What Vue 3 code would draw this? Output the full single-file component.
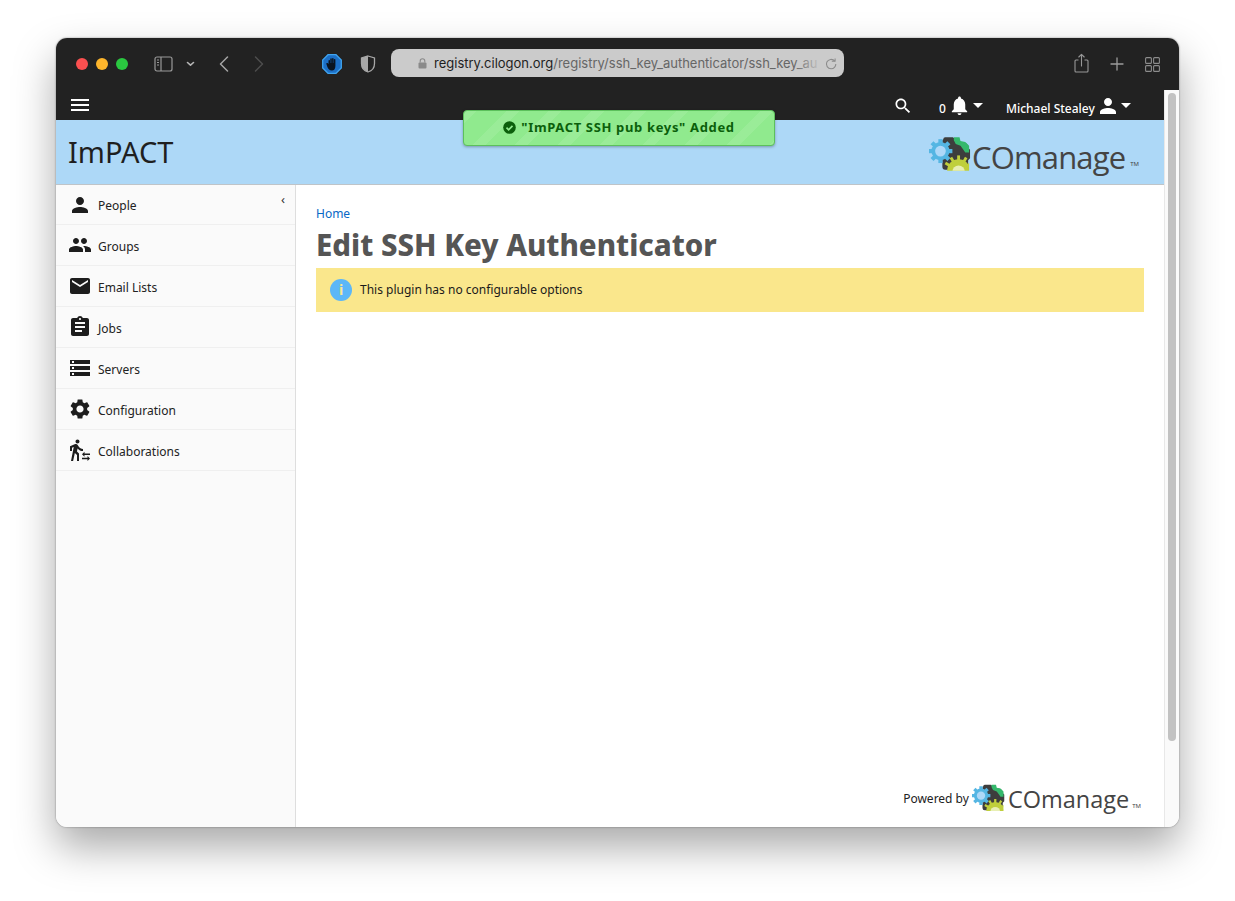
<script setup>
const nav = [
  { label: 'People', vb: '0 0 24 24', d: 'M12 12c2.21 0 4-1.79 4-4s-1.79-4-4-4-4 1.79-4 4 1.79 4 4 4zm0 2c-2.67 0-8 1.34-8 4v2h16v-2c0-2.66-5.33-4-8-4z' },
  { label: 'Groups', vb: '0 0 24 24', d: 'M16 11c1.66 0 2.99-1.34 2.99-3S17.66 5 16 5c-1.66 0-3 1.34-3 3s1.34 3 3 3zm-8 0c1.66 0 2.99-1.34 2.99-3S9.66 5 8 5C6.34 5 5 6.34 5 8s1.34 3 3 3zm0 2c-2.33 0-7 1.17-7 3.5V19h14v-2.5c0-2.33-4.67-3.5-7-3.5zm8 0c-.29 0-.62.02-.97.05 1.16.84 1.97 1.97 1.97 3.45V19h6v-2.5c0-2.33-4.67-3.5-7-3.5z' },
  { label: 'Email Lists', vb: '0 0 24 24', d: 'M20 4H4c-1.1 0-1.99.9-1.99 2L2 18c0 1.1.9 2 2 2h16c1.1 0 2-.9 2-2V6c0-1.1-.9-2-2-2zm0 4l-8 5-8-5V6l8 5 8-5v2z' },
  { label: 'Jobs', vb: '0 0 24 24', d: 'M19 3h-4.18C14.4 1.84 13.3 1 12 1c-1.3 0-2.4.84-2.82 2H5c-1.1 0-2 .9-2 2v14c0 1.1.9 2 2 2h14c1.1 0 2-.9 2-2V5c0-1.1-.9-2-2-2zm-7 0c.55 0 1 .45 1 1s-.45 1-1 1-1-.45-1-1 .45-1 1-1zm2 14H7v-2h7v2zm3-4H7v-2h10v2zm0-4H7V7h10v2z' },
  { label: 'Servers', vb: '0 0 24 24', d: 'M2 20h20v-4H2v4zm2-3h2v2H4v-2zM2 4v4h20V4H2zm4 3H4V5h2v2zm-4 7h20v-4H2v4zm2-3h2v2H4v-2z' },
  { label: 'Configuration', vb: '0 0 24 24', d: 'M19.14 12.94c.04-.3.06-.61.06-.94 0-.32-.02-.64-.07-.94l2.03-1.58c.18-.14.23-.41.12-.61l-1.92-3.32c-.12-.22-.37-.29-.59-.22l-2.39.96c-.5-.38-1.03-.7-1.62-.94l-.36-2.54c-.04-.24-.24-.41-.48-.41h-3.84c-.24 0-.43.17-.47.41l-.36 2.54c-.59.24-1.13.57-1.62.94l-2.39-.96c-.22-.08-.47 0-.59.22L2.74 8.87c-.12.21-.08.47.12.61l2.03 1.58c-.05.3-.09.63-.09.94s.02.64.07.94l-2.03 1.58c-.18.14-.23.41-.12.61l1.92 3.32c.12.22.37.29.59.22l2.39-.96c.5.38 1.03.7 1.62.94l.36 2.54c.05.24.24.41.48.41h3.84c.24 0 .44-.17.47-.41l.36-2.54c.59-.24 1.13-.56 1.62-.94l2.39.96c.22.08.47 0 .59-.22l1.92-3.32c.12-.22.07-.47-.12-.61l-2.01-1.58zM12 15.6c-1.98 0-3.6-1.62-3.6-3.6s1.62-3.6 3.6-3.6 3.6 1.62 3.6 3.6-1.62 3.6-3.6 3.6z' },
  { label: 'Collaborations', vb: '0 0 24 24', d: 'M16.49 15.5v-1.75L14 16.25l2.49 2.5V17H22v-1.5zm3.02 4.25H14v1.5h5.51V23L22 20.5 19.51 18zM9.5 5.5c1.1 0 2-.9 2-2s-.9-2-2-2-2 .9-2 2 .9 2 2 2zM5.75 8.9L3 23h2.1l1.75-8L9 17v6h2v-7.55L8.95 13.4l.6-3C10.85 12 12.8 13 15 13v-2c-1.85 0-3.45-1-4.35-2.45l-.95-1.6C9.35 6.35 8.7 6 8 6c-.25 0-.5.05-.75.1L2 8.3V13h2V9.65l1.75-.75' },
]
const person = nav[0].d
const gearTeeth = [0, 45, 90, 135, 180, 225, 270, 315]
</script>

<template>
  <svg class="defs" width="0" height="0" aria-hidden="true">
    <symbol id="gears" viewBox="0 0 44 36">
      <path d="M15 3q0-2 2-2h8l3 2 2 3h6l4 2 1 4 2 2v9l-2 2v7q0 3-3 3H17q-3 0-3-3V4z" fill="#3d3d3d" />
      <path d="M26 1h6l1 4 5 1 4 4v7h-4l-2-3-3-4-5-2-2-4z" fill="#35b86c" />
      <circle cx="12" cy="15.5" r="9.500" fill="#55b6e3" />
      <rect v-for="a in gearTeeth" :key="a" x="9.800" y="3" width="4.400" height="5" fill="#55b6e3" :transform="`rotate(${a} 12 15.5)`" />
      <circle cx="12" cy="15.5" r="5.600" fill="#aed8f8" />
      <clipPath id="yclip"><rect x="14" y="16" width="28" height="20" /></clipPath>
      <g clip-path="url(#yclip)">
        <circle cx="31" cy="36" r="12" fill="#bfcf3c" />
        <rect v-for="a in [-60,-30,0,30,60]" :key="a" x="29.500" y="20" width="3" height="6" fill="#bfcf3c" :transform="`rotate(${a} 31 36)`" />
        <circle cx="31" cy="37" r="6.500" fill="#e8efb4" />
      </g>
    </symbol>
  </svg>

  <div class="desktop">
    <div class="window">
      <header class="chrome">
        <div class="lights">
          <span class="light red"></span>
          <span class="light yellow"></span>
          <span class="light green"></span>
        </div>
        <svg class="sidebar-btn" width="19" height="16" viewBox="0 0 19 16" fill="none" stroke="#9a9a9a" stroke-width="1.2">
          <rect x="1" y="1" width="17" height="14" rx="2" />
          <path d="M7 1v14" />
          <path d="M3 4h2M3 6.5h2M3 9h2" stroke-width="1.1" />
        </svg>
        <svg class="chev-down" width="9" height="6" viewBox="0 0 9 6" fill="none" stroke="#b5b5b5" stroke-width="1.6" stroke-linecap="round" stroke-linejoin="round">
          <path d="M1.5 1.5l3 2.7 3-2.7" />
        </svg>
        <svg class="back" width="10" height="16" viewBox="0 0 10 16" fill="none" stroke="#a5a5a5" stroke-width="1.5" stroke-linecap="round" stroke-linejoin="round">
          <path d="M8.5 1L1.5 8l7 7" />
        </svg>
        <svg class="forward" width="10" height="16" viewBox="0 0 10 16" fill="none" stroke="#4d4d4d" stroke-width="1.5" stroke-linecap="round" stroke-linejoin="round">
          <path d="M1.5 1l7 7-7 7" />
        </svg>
        <svg class="stop" width="20" height="20" viewBox="0 0 20 20">
          <path d="M6 .7h8L19.300 6v8L14 19.300H6L.7 14V6z" fill="#1c6fc6" stroke="#3fa4f0" stroke-width="1.300" />
          <path d="M6.500 10V6.500a.8.8 0 011.500 0V9h.3V4.800a.8.8 0 011.500 0V9h.3V4.500a.8.8 0 011.500 0V9h.3V5.500a.8.8 0 011.500 0V12c0 3-1.500 4.500-3.500 4.500-2.500 0-3.500-1.500-4.500-3.500L4.400 10c-.4-1 .9-1.500 1.400-.7z" fill="#0a1420" />
        </svg>
        <svg class="shield" width="16" height="18" viewBox="0 0 16 18">
          <path d="M8 1l6.500 2v5.500C14.500 13 11.500 16 8 17 4.500 16 1.500 13 1.500 8.500V3z" fill="none" stroke="#a8a8a8" stroke-width="1.3" />
          <path d="M8 1L1.500 3v5.500C1.500 13 4.500 16 8 17z" fill="#a8a8a8" />
        </svg>
        <div class="urlbar">
          <svg class="lock" width="9" height="11" viewBox="0 0 9 11">
            <rect x=".5" y="4.500" width="8" height="6" rx="1" fill="#8a8a8a" />
            <path d="M2.200 4.500V3a2.300 2.300 0 014.600 0v1.500" fill="none" stroke="#8a8a8a" stroke-width="1.100" />
          </svg>
          <span class="url"><span class="host">registry.cilogon.org</span>/registry/ssh_key_authenticator/ssh_key_au</span>
          <span class="fade"></span>
          <svg class="reload" width="12" height="12" viewBox="0 0 12 12" fill="none" stroke="#8c8c8c" stroke-width="1.100">
            <path d="M9.800 3.200A4.700 4.700 0 106.200 10.800 4.700 4.700 0 0010.800 6" />
            <path d="M6.800 3.200h3.300V.6" stroke-linejoin="round" />
          </svg>
        </div>
        <svg class="share" width="15" height="20" viewBox="0 0 15 20" fill="none" stroke="#989898" stroke-width="1.100">
          <path d="M4.500 7H2a1 1 0 00-1 1v10a1 1 0 001 1h11a1 1 0 001-1V8a1 1 0 00-1-1h-2.500" />
          <path d="M7.500 13V1.500M4.800 4l2.700-2.700L10.200 4" stroke-linecap="round" stroke-linejoin="round" />
        </svg>
        <svg class="plus" width="14" height="14" viewBox="0 0 14 14" stroke="#9c9c9c" stroke-width="1.300" stroke-linecap="round">
          <path d="M7 1v12M1 7h12" />
        </svg>
        <svg class="tabs" width="15" height="15" viewBox="0 0 15 15" fill="none" stroke="#8c8c8c" stroke-width="1.100">
          <rect x=".6" y=".6" width="5.800" height="5.800" rx="1" />
          <rect x="8.600" y=".6" width="5.800" height="5.800" rx="1" />
          <rect x=".6" y="8.600" width="5.800" height="5.800" rx="1" />
          <rect x="8.600" y="8.600" width="5.800" height="5.800" rx="1" />
        </svg>
      </header>

      <div class="viewport">
        <div class="app">
          <div class="topbar">
            <div class="hamburger"><i></i><i></i><i></i></div>
            <svg class="search" width="20" height="20" viewBox="0 0 24 24" fill="#fff">
              <path d="M15.500 14h-.79l-.28-.27C15.410 12.590 16 11.110 16 9.500 16 5.910 13.090 3 9.500 3S3 5.910 3 9.500 5.910 16 9.500 16c1.610 0 3.090-.59 4.230-1.570l.27.28v.79l5 4.990L20.490 19l-4.990-5zm-6 0C7.010 14 5 11.990 5 9.500S7.010 5 9.500 5 14 7.010 14 9.500 11.990 14 9.500 14z" />
            </svg>
            <span class="count">0</span>
            <svg class="bell" width="23" height="23" viewBox="0 0 24 24" fill="#fff">
              <path d="M12 22c1.100 0 2-.9 2-2h-4c0 1.100.89 2 2 2zm6-6v-5c0-3.070-1.640-5.640-4.500-6.320V4c0-.83-.67-1.500-1.500-1.500s-1.500.67-1.500 1.500v.68C7.630 5.360 6 7.920 6 11v5l-2 2v1h16v-1l-2-2z" />
            </svg>
            <span class="caret"></span>
            <span class="user">Michael Stealey</span>
            <svg class="user-icon" width="24" height="24" viewBox="0 0 24 24" fill="#fff"><path :d="person" /></svg>
            <span class="caret last"></span>
          </div>
          <div class="banner">
            <span class="co-name">ImPACT</span>
            <div class="logo big">
              <svg width="42" height="35"><use href="#gears" /></svg>
              <span class="wordmark">COmanage</span><span class="tm">TM</span>
            </div>
          </div>
          <div class="columns">
            <aside class="side">
              <span class="collapse">‹</span>
              <a v-for="item in nav" :key="item.label" class="nav-item">
                <svg width="24" height="24" :viewBox="item.vb" fill="#1d1d1d"><path :d="item.d" /></svg>
                <span>{{ item.label }}</span>
              </a>
            </aside>
            <main class="main">
              <a class="crumb">Home</a>
              <h1>Edit SSH Key Authenticator</h1>
              <div class="notice">
                <span class="info">i</span>
                <span class="notice-text">This plugin has no configurable options</span>
              </div>
              <footer class="foot">
                <span class="powered">Powered by</span>
                <div class="logo small">
                  <svg width="33" height="27"><use href="#gears" /></svg>
                  <span class="wordmark">COmanage</span><span class="tm">TM</span>
                </div>
              </footer>
            </main>
          </div>
        </div>
        <div class="scrollbar"><div class="thumb"></div></div>
      </div>

      <div class="toast">
        <svg width="13" height="13" viewBox="0 0 13 13">
          <circle cx="6.500" cy="6.500" r="6.300" fill="#0b5f0b" />
          <path d="M3.500 6.700l2.100 2.100 3.900-4" fill="none" stroke="#91ea8f" stroke-width="1.700" />
        </svg>
        <span>"ImPACT SSH pub keys" Added</span>
      </div>
    </div>
  </div>
</template>

<style>
html { overflow: hidden; }
html, body { margin: 0; background: #fff; }
</style>

<style scoped>
.defs { position: absolute; }
.desktop {
  height: 901px;
  box-sizing: border-box;
  padding: 38px 0 0 56px;
  overflow: hidden;
}
.window {
  position: relative;
  width: 1123px;
  height: 789px;
  border-radius: 11px;
  overflow: hidden;
  background: #fff;
  box-shadow: 0 20px 42px rgba(0, 0, 0, .34), 0 0 2px rgba(0, 0, 0, .45);
  font-family: "Noto Sans", sans-serif;
  display: flex;
  flex-direction: column;
}
.chrome {
  height: 52px;
  flex: none;
  background: #222;
  display: flex;
  align-items: center;
  padding-left: 20px;
}
.lights { display: flex; gap: 8px; }
.light { width: 12px; height: 12px; border-radius: 50%; }
.red { background: #fb5050; }
.yellow { background: #fdb52c; }
.green { background: #2ac840; }
.sidebar-btn { margin-left: 26px; }
.chev-down { margin-left: 13px; }
.back { margin-left: 24px; }
.forward { margin-left: 25px; }
.stop { margin-left: 58px; }
.shield { margin-left: 18px; }
.urlbar {
  position: relative;
  width: 453px;
  height: 28px;
  margin-left: 15px;
  margin-bottom: 2px;
  background: #cbcbcb;
  border-radius: 8px;
  display: flex;
  align-items: center;
  padding-left: 27px;
  box-sizing: border-box;
  font-family: Inter, "Liberation Sans", sans-serif;
  font-size: 13px;
  color: #666;
  white-space: nowrap;
  overflow: hidden;
}
.lock { flex: none; }
.url { margin-left: 7px; }
.host { color: #1e1e1e; }
.fade {
  position: absolute;
  right: 22px;
  top: 0;
  bottom: 0;
  width: 28px;
  background: linear-gradient(90deg, rgba(203, 203, 203, 0), #cbcbcb);
}
.reload { position: absolute; right: 7px; top: 9px; }
.share { margin-left: 230px; margin-bottom: 2px; }
.plus { margin-left: 21px; }
.tabs { margin-left: 21px; }

.viewport { flex: 1; display: flex; min-height: 0; }
.app { flex: 1; display: flex; flex-direction: column; min-width: 0; }
.topbar {
  height: 30px;
  flex: none;
  background: #222;
  color: #fff;
  display: flex;
  align-items: center;
  font-size: 12px;
  padding-left: 15px;
}
.hamburger { display: flex; flex-direction: column; gap: 3px; margin-top: -1px; }
.hamburger i { display: block; width: 18px; height: 2px; background: #fff; }
.search { margin-left: 804px; margin-top: 1px; }
.count { margin-left: 26px; margin-top: 7px; font-weight: 500; }
.bell { margin-left: 2px; margin-top: 1px; }
.caret {
  width: 0;
  height: 0;
  border-left: 5.500px solid transparent;
  border-right: 5.500px solid transparent;
  border-top: 5.500px solid #fff;
  margin-left: 2px;
  margin-top: 1px;
}
.user { margin-left: 23px; margin-top: 7px; font-weight: 500; }
.user-icon { margin-left: 1px; margin-top: 1px; }
.caret.last { margin-left: 1px; }
.banner {
  height: 65px;
  flex: none;
  box-sizing: border-box;
  background: #add8f7;
  border-bottom: 1px solid #bfc4c8;
  display: flex;
  align-items: center;
  justify-content: space-between;
  padding: 0 25px 0 12px;
  color: #1f1f1f;
}
.co-name { font-size: 29px; margin-bottom: 2px; }
.logo { display: flex; color: #444; }
.logo svg { flex: none; }
.big { align-items: flex-start; margin-top: 8px; }
.big svg { margin: 1px -2px 0 2px; }
.big .wordmark {
  font-size: 31px;
  letter-spacing: -.85px;
  line-height: 40px;
  font-family: "Open Sans", sans-serif;
  margin: 2px 0 0 3px;
}
.big .tm { font-size: 6px; margin: 25px 0 0 5px; }
.columns { flex: 1; display: flex; min-height: 0; }
.side {
  position: relative;
  width: 240px;
  flex: none;
  box-sizing: border-box;
  background: #fafafa;
  border-right: 1px solid #dedede;
}
.collapse {
  position: absolute;
  top: 5px;
  right: 10px;
  font-size: 13px;
  color: #333;
}
.nav-item {
  height: 41px;
  box-sizing: border-box;
  display: flex;
  align-items: center;
  gap: 6px;
  padding-left: 12px;
  font-size: 12px;
  color: #222;
  border-bottom: 1px solid #efefef;
}
.nav-item:first-of-type { height: 40px; }
.nav-item:first-of-type span { margin-top: 1px; }
.nav-item svg { flex: none; }
.nav-item span { margin-top: 3px; }
.main {
  flex: 1;
  min-width: 0;
  display: flex;
  flex-direction: column;
  padding: 20px 20px 13px;
}
.crumb { font-size: 12px; line-height: 17px; color: #0868c6; }
h1 {
  margin: 3px 0 3px;
  font-size: 29.400px;
  line-height: 40px;
  font-weight: 800;
  color: #555;
}
.notice {
  height: 44px;
  background: #fae78c;
  display: flex;
  align-items: center;
  padding-left: 14px;
  gap: 8px;
  font-size: 12px;
  color: #1a1a1a;
}
.notice-text { margin-bottom: 2px; }
.info {
  width: 22px;
  height: 22px;
  border-radius: 50%;
  background: #5cb7f7;
  color: #fae78c;
  font-weight: 700;
  font-size: 14px;
  text-align: center;
  line-height: 22px;
}
.foot {
  margin-top: auto;
  display: flex;
  justify-content: flex-end;
  align-items: center;
  padding-right: 3px;
}
.powered { font-size: 12px; color: #222; margin-right: 3px; margin-bottom: 2px; }
.small .wordmark { font-size: 23.500px; line-height: 30px; font-family: "Open Sans", sans-serif; margin-left: 3px; }
.small .tm { font-size: 6px; margin: 18px 0 0 3px; }
.scrollbar {
  width: 15px;
  flex: none;
  box-sizing: border-box;
  background: #fafafa;
  border-left: 1px solid #e8e8e8;
  padding: 3px 3px 0 3px;
}
.thumb { height: 648px; width: 8px; border-radius: 4px; background: #c2c2c2; }
.toast {
  position: absolute;
  left: 407px;
  top: 72px;
  width: 312px;
  height: 36px;
  box-sizing: border-box;
  background: repeating-linear-gradient(135deg, rgba(255, 255, 255, .09) 0 9px, transparent 9px 30px), #90ea8e;
  border: 1px solid #5cc05c;
  border-radius: 4px;
  box-shadow: 0 1px 3px rgba(0, 0, 0, .3);
  display: flex;
  align-items: center;
  justify-content: center;
  gap: 5px;
  padding-bottom: 2px;
  color: #0b5f0b;
  font-size: 13px;
  font-weight: 700;
  letter-spacing: .65px;
}
</style>
